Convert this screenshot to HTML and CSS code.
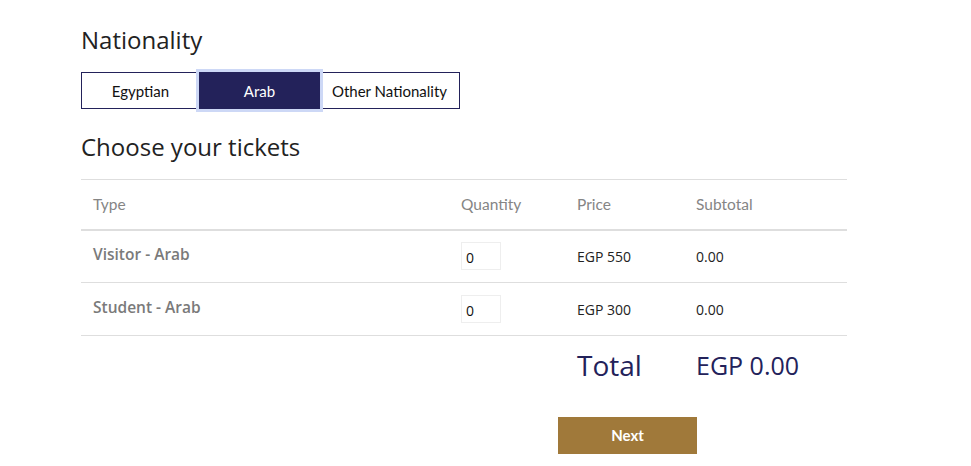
FILE: index.html
```html
<html lang="en"><head>
  <meta charset="UTF-8">
  <meta name="viewport" content="width=device-width, initial-scale=1.0">
  <title>Tickets</title>
  <link rel="stylesheet" href="styles.css">
</head>
<body>
  <div class="container">
    <h2 class="section-title">Nationality</h2>
    <div class="nat-group">
      <button class="nat-btn nat-egy">Egyptian</button>
      <button class="nat-btn nat-arab active">Arab</button>
      <button class="nat-btn nat-other">Other Nationality</button>
    </div>

    <h2 class="section-title tickets-title">Choose your tickets</h2>
    <table class="tickets">
      <thead>
        <tr>
          <th class="col-type">Type</th>
          <th class="col-qty">Quantity</th>
          <th class="col-price">Price</th>
          <th class="col-sub">Subtotal</th>
        </tr>
      </thead>
      <tbody>
        <tr>
          <td class="type">Visitor - Arab</td>
          <td><input class="qty" type="text" value="0"></td>
          <td class="price">EGP 550</td>
          <td class="sub">0.00</td>
        </tr>
        <tr>
          <td class="type">Student - Arab</td>
          <td><input class="qty" type="text" value="0"></td>
          <td class="price">EGP 300</td>
          <td class="sub">0.00</td>
        </tr>
        <tr class="total-row">
          <td></td>
          <td></td>
          <td class="total-label">Total</td>
          <td class="total-value">EGP 0.00</td>
        </tr>
      </tbody>
    </table>

    <div class="actions">
      <button class="next-btn">Next</button>
    </div>
  </div>
</body></html>
```
FILE: styles.css
```css
 :root {
   --navy: #23225a;
   --gold: #a0793a;
   --line: #dedede;
 }

 body {
   margin: 0;
   background-color: #ffffff;
   font-family: "Open Sans", sans-serif;
   color: #222;
 }
 .container {
   width: 766px;
   padding: 25px 0 0 81px;
 }
 .section-title {
   font-size: 24px;
   font-weight: 400;
   line-height: 30px;
   margin: 0 0 17px 0;
   color: #222;
 }
 .tickets-title {
   margin: 23px 0 17px 0;
 }
 .nat-group {
   display: flex;
 }
 .nat-btn {
   height: 37px;
   border: 1px solid var(--navy);
   background-color: #ffffff;
   color: #111;
   font-family: Lato, sans-serif;
   font-size: 15px;
   padding: 0;
   margin: 0;
 }
 .nat-egy {
   width: 118px;
   border-right: none;
 }
 .nat-arab {
   width: 121px;
 }
 .nat-other {
   width: 140px;
   border-left: none;
 }
 .nat-btn.active {
   background-color: var(--navy);
   color: #ffffff;
   box-shadow: 0 0 0 3px #cdd8f6;
   position: relative;
 }

 .tickets {
   width: 766px;
   border-collapse: collapse;
   table-layout: fixed;
 }
 .tickets th,
 .tickets td {
   text-align: left;
   padding: 0 12px;
 }
 .tickets th {
   height: 50px;
   font-family: Lato, sans-serif;
   font-size: 15.5px;
   font-weight: 400;
   color: #858585;
   border-top: 1px solid var(--line);
   border-bottom: 2px solid var(--line);
 }
 .col-type { width: 344px; }
 .col-qty { width: 92px; }
 .col-price { width: 95px; }

 .tickets tbody tr td {
   height: 53px;
   border-bottom: 1px solid var(--line);
 }
 .type {
   font-size: 15.5px;
   font-weight: 600;
   color: #7a7a7a;
   padding-bottom: 5px !important;
 }
 .qty {
   width: 40px;
   height: 28px;
   box-sizing: border-box;
   border: 1px solid #eeeeee;
   padding: 2px 4px 0;
   font-family: "Open Sans", sans-serif;
   font-size: 14px;
   color: #111;
   outline: none;
 }
 .price {
   font-size: 14px;
   color: #222;
 }
 .sub {
   font-size: 14px;
   color: #222;
 }
 .tickets tbody tr.total-row td {
   height: 58px;
   border-bottom: none;
   color: var(--navy);
 }
 .total-label {
   font-size: 28px;
 }
 .total-value {
   font-size: 25px;
 }

 .actions {
   margin: 23px 0 0 477px;
 }
 .next-btn {
   width: 139px;
   height: 37px;
   border: none;
   background-color: var(--gold);
   color: #ffffff;
   font-family: Lato, sans-serif;
   font-size: 15px;
   font-weight: 700;
 }
```
